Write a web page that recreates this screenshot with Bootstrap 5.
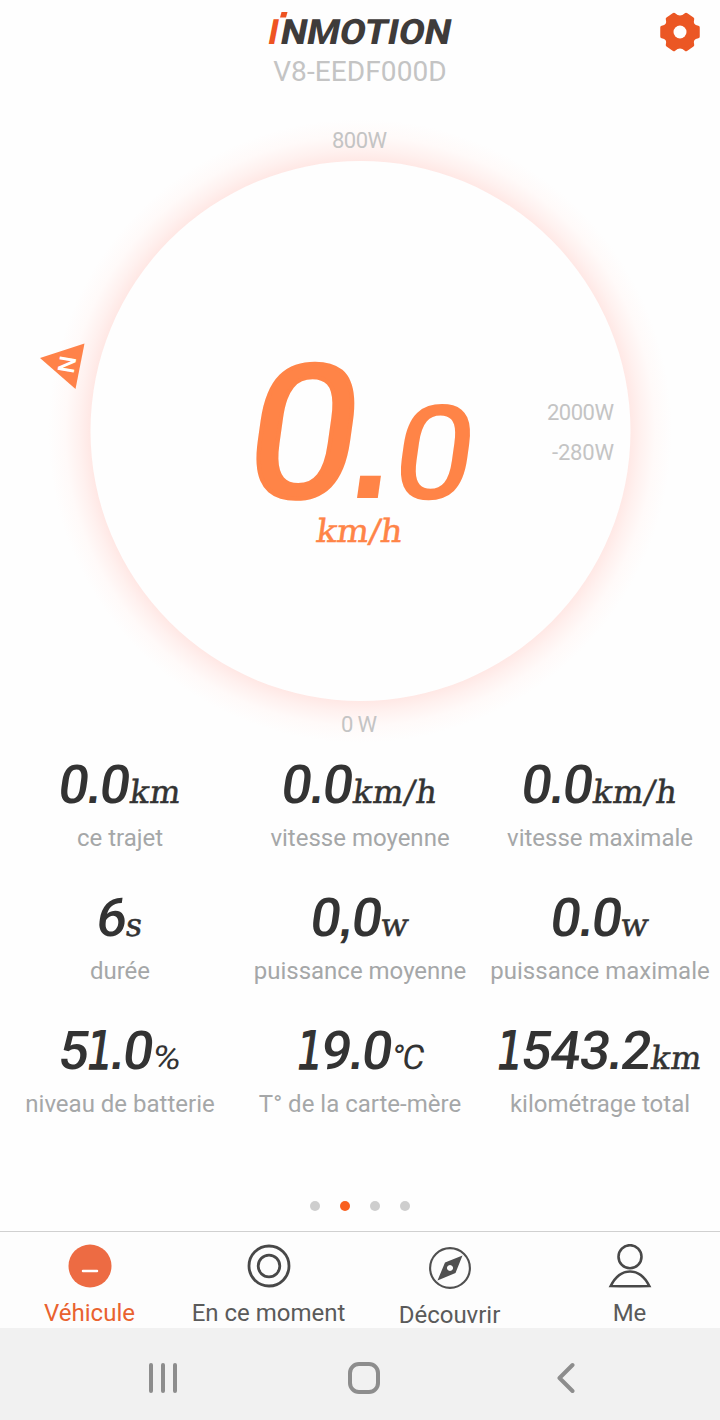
<!DOCTYPE html>
<html lang="fr">
<head>
<meta charset="utf-8">
<meta name="viewport" content="width=device-width, initial-scale=1">
<title>InMotion V8</title>
<link href="https://cdn.jsdelivr.net/npm/bootstrap@5.3.0/dist/css/bootstrap.min.css" rel="stylesheet">
<style>
  body { font-family: Roboto, sans-serif; background: #fefefe; width: 720px; height: 1420px; overflow: hidden; }
  svg { display: block; flex: none; }
  .topbar { height: 90px; padding-top: 5px; }
  .device { font-size: 28px; line-height: 32px; color: #c4c4c4; letter-spacing: .1px; }
  .settings { top: 12px; right: 20px; }
  .dial { height: 665px; }
  .stat { height: 133px; }
  .stat-value { height: 60px; line-height: 60px; color: #333; font-size: 53.500px; font-weight: 500; white-space: nowrap; }
  .slant { display: inline-block; transform: skewX(-8deg); }
  .num { letter-spacing: -1px; }
  .pt { font-family: "Liberation Sans", sans-serif; font-weight: 700; font-size: 46px; line-height: 1; }
  .one { display: inline-block; font-family: "DejaVu Sans", sans-serif; font-size: 52.500px; line-height: 1; font-weight: 400; letter-spacing: 0; transform: scaleX(.78); margin: 0 -5px; -webkit-text-stroke: 1.400px #333; }
  .unit { font-family: "DejaVu Serif", serif; font-size: 32px; line-height: 1; font-weight: 400; letter-spacing: .9px; -webkit-text-stroke: .5px #333; }
  .unit-pct { display: inline-block; font-size: 33px; line-height: 1; font-weight: 400; transform: skewX(-8deg) scaleX(1.15); margin: 0 2px; }
  .unit-deg { font-size: 34px; line-height: 1; font-weight: 400; letter-spacing: -2px; }
  .stat-label { margin-top: 8px; font-size: 24px; line-height: 30px; color: #a5a7a8; white-space: nowrap; }
  .pager { height: 77px; padding-top: 47px; gap: 20px; }
  .pager span { width: 10px; height: 10px; border-radius: 50%; background: #cecece; }
  .pager .on { background: #f9601f; }
  .tabs { height: 97px; border-top: 1px solid #d0d0d0; background: #fdfdfd; }
  .tab-item { width: 25%; padding: 12px 1px 0 0; gap: 10px; font-size: 24px; line-height: 30px; color: #5a5a5a; white-space: nowrap; }
  .tab-item.on { color: #e9622f; }
  .tab-item.now { padding-right: 3px; }
  .tab-item.discover { padding-top: 14px; padding-right: 1px; }
  .sysbar { height: 92px; background: #f1f1f1; }
</style>
</head>
<body class="d-flex flex-column">
  <header class="topbar position-relative d-flex flex-column align-items-center">
    <svg width="220" height="51" viewBox="250 5 220 51" role="img" aria-label="inmotion">
      <g font-family="Roboto, sans-serif" font-weight="800" font-size="35">
        <text transform="translate(266.500 44) skewX(-11)" fill="#ee5322" textLength="10" lengthAdjust="spacingAndGlyphs">I</text>
        <text transform="translate(279 44) skewX(-11)" fill="#3e3b3a" textLength="170" lengthAdjust="spacingAndGlyphs">NMOTION</text>
      </g>
      <path d="M281.500 12h6l-1.500 5.500h-6z" fill="#ee5322"/>
    </svg>
    <div class="device">V8-EEDF000D</div>
    <svg class="settings position-absolute" width="40" height="40" viewBox="-20 -20 40 40">
      <path fill="#eb5724" stroke="#eb5724" stroke-width="3.500" stroke-linejoin="round" d="M18-4.500V4.500Q10.500 6 12.500 13L6 17.500Q0 12-6 17.500L-12.500 13Q-10.500 6-18 4.500V-4.500Q-10.500-6-12.500-13L-6-17.500Q0-12 6-17.500L12.500-13Q10.500-6 18-4.500z"/>
      <circle r="6.500" fill="#fefefe"/>
    </svg>
  </header>

  <section class="dial">
    <svg width="720" height="665" viewBox="0 90 720 665">
      <defs>
        <radialGradient id="glow" gradientUnits="userSpaceOnUse" cx="360" cy="431" r="312">
          <stop offset=".865" stop-color="#ffe8e5"/>
          <stop offset=".9" stop-color="#fff1ef"/>
          <stop offset=".945" stop-color="#fffaf9"/>
          <stop offset="1" stop-color="#fefefe"/>
        </radialGradient>
      </defs>
      <circle cx="360" cy="431" r="312" fill="url(#glow)"/>
      <circle cx="360.500" cy="431" r="270" fill="#fefefe"/>
      <g font-family="Roboto, sans-serif" font-size="22" fill="#c4c4c4">
        <text x="332" y="148" textLength="55">800W</text>
        <text x="547" y="420" textLength="67">2000W</text>
        <text x="552" y="460" textLength="62">-280W</text>
        <text x="341" y="732" textLength="36">0 W</text>
      </g>
      <path d="M40 358L84.500 343.500L75.500 389z" fill="#ff8249"/>
      <text transform="translate(67 364.500) rotate(-80)" text-anchor="middle" y="8" font-family="Roboto, sans-serif" font-weight="500" font-size="23" fill="#fff" textLength="17" lengthAdjust="spacingAndGlyphs">N</text>
      <g fill="#ff8447" stroke="#ff8447" font-family="Roboto, sans-serif">
        <text transform="translate(241 497) skewX(-8) scale(1.06 1)" font-size="185" stroke-width="4">0</text>
        <text transform="translate(345 498) skewX(-8)" font-family="'DejaVu Sans', sans-serif" font-weight="700" font-size="118" stroke="none">.</text>
        <text transform="translate(389.500 497.500) skewX(-8) scale(1.09 1)" font-size="129" stroke-width="2">0</text>
      </g>
      <text transform="translate(315 542) skewX(-8)" font-family="'DejaVu Serif', serif" font-size="32" fill="#ff8447" stroke="#ff8447" stroke-width=".5" textLength="86" lengthAdjust="spacingAndGlyphs">km/h</text>
    </svg>
  </section>

  <section class="row g-0 text-center">
    <div class="col-4 stat"><div class="stat-value"><span class="slant num">0<span class="pt">.</span>0</span><span class="slant unit">km</span></div><div class="stat-label">ce trajet</div></div>
    <div class="col-4 stat"><div class="stat-value"><span class="slant num">0<span class="pt">.</span>0</span><span class="slant unit">km/h</span></div><div class="stat-label">vitesse moyenne</div></div>
    <div class="col-4 stat"><div class="stat-value"><span class="slant num">0<span class="pt">.</span>0</span><span class="slant unit">km/h</span></div><div class="stat-label">vitesse maximale</div></div>
    <div class="col-4 stat"><div class="stat-value"><span class="slant num">6</span><span class="slant unit">s</span></div><div class="stat-label">durée</div></div>
    <div class="col-4 stat"><div class="stat-value"><span class="slant num">0<span class="pt">,</span>0</span><span class="slant unit">w</span></div><div class="stat-label">puissance moyenne</div></div>
    <div class="col-4 stat"><div class="stat-value"><span class="slant num">0<span class="pt">.</span>0</span><span class="slant unit">w</span></div><div class="stat-label">puissance maximale</div></div>
    <div class="col-4 stat"><div class="stat-value"><span class="slant num">5<span class="one">1</span><span class="pt">.</span>0</span><span class="unit-pct">%</span></div><div class="stat-label">niveau de batterie</div></div>
    <div class="col-4 stat"><div class="stat-value"><span class="slant num"><span class="one">1</span>9<span class="pt">.</span>0</span><span class="slant unit-deg">°C</span></div><div class="stat-label">T° de la carte-mère</div></div>
    <div class="col-4 stat"><div class="stat-value"><span class="slant num"><span class="one">1</span>543<span class="pt">.</span>2</span><span class="slant unit">km</span></div><div class="stat-label">kilométrage total</div></div>
  </section>

  <div class="pager d-flex justify-content-center"><span></span><span class="on"></span><span></span><span></span></div>

  <nav class="tabs d-flex">
    <div class="tab-item on d-flex flex-column align-items-center">
      <svg width="44" height="44" viewBox="-22 -22 44 44"><circle r="21.500" fill="#ed6b43"/><path d="M-7 5H7" stroke="#fff" stroke-width="2.500" stroke-linecap="round"/></svg>
      <span>Véhicule</span>
    </div>
    <div class="tab-item now d-flex flex-column align-items-center">
      <svg width="44" height="44" viewBox="-22 -22 44 44" fill="none" stroke="#484848" stroke-width="2.800"><circle r="20"/><circle r="10.800"/></svg>
      <span>En ce moment</span>
    </div>
    <div class="tab-item discover d-flex flex-column align-items-center">
      <svg width="44" height="44" viewBox="-22 -22 44 44"><circle r="19.900" fill="none" stroke="#505050" stroke-width="2.100"/><path fill="#505050" fill-rule="evenodd" d="M12.500-12.500L5.500 5L-12.500 12.500L-5-5.500zM0-3a3 3 0 1 0 .01 0z"/></svg>
      <span>Découvrir</span>
    </div>
    <div class="tab-item d-flex flex-column align-items-center">
      <svg width="44" height="44" viewBox="-22 -22 44 44" fill="none" stroke="#484848" stroke-width="2.600"><circle cy="-9.300" r="11.500"/><path d="M-19.300 20Q-12 5.500 0 5.500T19.300 20Q0 20.600-19.300 20z"/></svg>
      <span>Me</span>
    </div>
  </nav>

  <footer class="sysbar">
    <svg width="720" height="92" viewBox="0 1328 720 92" fill="none" stroke="#8d8d8d" stroke-width="4" stroke-linecap="round" stroke-linejoin="round">
      <path d="M151 1365v26M163 1365v26M175 1365v26M572.500 1365l-13 13 13 13"/>
      <rect x="350" y="1364" width="28" height="28" rx="9"/>
    </svg>
  </footer>
<script src="https://cdn.jsdelivr.net/npm/bootstrap@5.3.0/dist/js/bootstrap.bundle.min.js"></script>
</body>
</html>
